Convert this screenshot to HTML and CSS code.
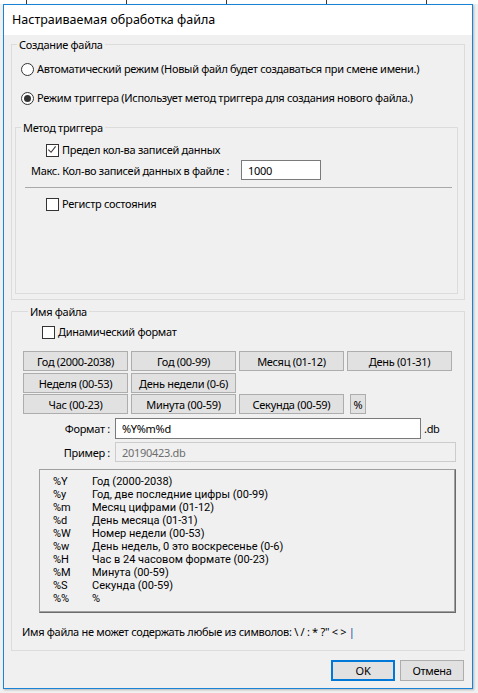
FILE: index.html
```html
<!DOCTYPE html>
<html lang="ru">
<head>
<meta charset="utf-8">
<title>Настраиваемая обработка файла</title>
<link rel="stylesheet" href="styles.css">
</head>
<body>
<div class="desk-top"></div>
<div class="dialog">
  <div class="titlebar">Настраиваемая обработка файла</div>
  <div class="client">
    <fieldset class="group g-create">
      <legend>Создание файла</legend>
      <div class="radio-row r1"><span class="radio"></span><span>Автоматический режим (Новый файл будет создаваться при смене имени.)</span></div>
      <div class="radio-row r2"><span class="radio on"></span><span>Режим триггера (Использует метод триггера для создания нового файла.)</span></div>
      <fieldset class="group g-trigger">
        <legend>Метод триггера</legend>
        <div class="check-row c-limit"><span class="check on"><svg viewBox="0 0 13 13" width="11" height="11"><polyline points="1.6,5.4 4.8,8.6 10.2,1.6" fill="none" stroke="#3a3a3a" stroke-width="1.3"/></svg></span><span>Предел кол-ва записей данных</span></div>
        <div class="max-row"><span class="max-label">Макс. Кол-во записей данных в файле :</span><span class="edit max-edit">1000</span></div>
        <div class="sep"></div>
        <div class="check-row c-state"><span class="check"></span><span>Регистр состояния</span></div>
      </fieldset>
    </fieldset>
    <fieldset class="group g-name">
      <legend>Имя файла</legend>
      <div class="check-row c-dyn"><span class="check"></span><span>Динамический формат</span></div>
      <div class="btn-row first">
        <span class="btn">Год (2000-2038)</span><span class="btn">Год (00-99)</span><span class="btn">Месяц (01-12)</span><span class="btn">День (01-31)</span>
      </div>
      <div class="btn-row second">
        <span class="btn">Неделя (00-53)</span><span class="btn">День недели (0-6)</span>
      </div>
      <div class="btn-row third">
        <span class="btn">Час (00-23)</span><span class="btn">Минута (00-59)</span><span class="btn">Секунда (00-59)</span><span class="btn pct">%</span>
      </div>
      <div class="field-row fmt">
        <span class="field-label">Формат :</span><span class="edit fmt-edit">%Y%m%d</span><span class="ext">.db</span>
      </div>
      <div class="field-row ex">
        <span class="field-label">Пример :</span><span class="edit disabled ex-edit">20190423.db</span>
      </div>
      <div class="legend-list">
        <div class="li"><span class="code">%Y</span><span>Год (2000-2038)</span></div>
        <div class="li"><span class="code">%y</span><span>Год, две последние цифры (00-99)</span></div>
        <div class="li"><span class="code">%m</span><span>Месяц цифрами (01-12)</span></div>
        <div class="li"><span class="code">%d</span><span>День месяца (01-31)</span></div>
        <div class="li"><span class="code">%W</span><span>Номер недели (00-53)</span></div>
        <div class="li"><span class="code">%w</span><span>День недель, 0 это воскресенье (0-6)</span></div>
        <div class="li"><span class="code">%H</span><span>Час в 24 часовом формате (00-23)</span></div>
        <div class="li"><span class="code">%M</span><span>Минута (00-59)</span></div>
        <div class="li"><span class="code">%S</span><span>Секунда (00-59)</span></div>
        <div class="li"><span class="code">%%</span><span>%</span></div>
      </div>
      <div class="note">Имя файла не может содержать любые из символов: \ / : * ?" &lt; &gt; <span class="bar">|</span></div>
    </fieldset>
    <div class="actions">
      <span class="btn default">OK</span><span class="btn">Отмена</span>
    </div>
  </div>
</div>
</body>
</html>
```
FILE: styles.css
```css
html, body {
  margin: 0;
  padding: 0;
}
body {
  width: 478px;
  height: 693px;
  overflow: hidden;
  background: #f0f0f0;
  font-family: "Noto Sans", "DejaVu Sans", sans-serif;
  font-size: 11px;
  letter-spacing: -0.3px;
  color: #000;
}
.desk-top {
  height: 4px;
  background-color: #fff;
  background-image: repeating-linear-gradient(to right, transparent 0 26px, #3a3a3a 26px 27px, transparent 27px 100px);
}
.dialog {
  margin-left: 3px;
  width: 470px;
  height: 685px;
  box-sizing: border-box;
  border: 1px solid #1883d7;
  background: #f0f0f0;
  box-shadow: 1px 1px 2px rgba(0, 0, 0, 0.25);
  overflow: hidden;
}
.titlebar {
  height: 30px;
  background: #fff;
  padding-left: 8px;
  display: flex;
  align-items: center;
  font-size: 12.5px;
  letter-spacing: 0;
  line-height: 16px;
}
.client {
  padding: 0 7px;
}
fieldset.group {
  margin: 0;
  padding: 0;
  border: 1px solid #dcdcdc;
  min-width: 0;
}
fieldset.group > legend {
  margin-left: 5px;
  padding: 0 2px;
  line-height: 17px;
  height: 17px;
}
.g-create {
  margin-top: 1px !important;
}
.radio-row, .check-row {
  display: flex;
  align-items: center;
  height: 16px;
  line-height: 16px;
}
.radio-row {
  margin-left: 9px;
  gap: 3px;
}
.r1 { margin-top: 8px; }
.r2 { margin-top: 13px; }
.radio {
  width: 13px;
  height: 13px;
  box-sizing: border-box;
  border: 1px solid #333;
  border-radius: 50%;
  background: #fff;
  display: flex;
  align-items: center;
  justify-content: center;
  flex: none;
}
.radio.on::after {
  content: "";
  width: 7px;
  height: 7px;
  border-radius: 50%;
  background: #333;
}
.check {
  width: 13px;
  height: 13px;
  box-sizing: border-box;
  border: 1px solid #333;
  background: #fff;
  display: flex;
  align-items: center;
  justify-content: center;
  flex: none;
}
.check-row {
  gap: 3px;
}
.g-trigger {
  margin: 13px 6px 5px 3px !important;
  padding-bottom: 81px !important;
}
.c-limit {
  margin-top: 6px;
  margin-left: 30px;
}
.max-row {
  margin-top: 2px;
  margin-left: 15px;
  display: flex;
  align-items: center;
  height: 20px;
}
.max-label {
  width: 210px;
  flex: none;
}
.edit {
  box-sizing: border-box;
  border: 1px solid #7a7a7a;
  background: #fff;
  display: flex;
  align-items: center;
  padding-left: 6px;
  flex: none;
}
.max-edit {
  width: 80px;
  height: 20px;
}
.sep {
  margin: 7px 5px 0 9px;
  height: 1px;
  background: #a9a9a9;
}
.c-state {
  margin-top: 8px;
  margin-left: 30px;
}
.g-name {
  margin-top: 3px !important;
  padding: 0 0 10px 11px !important;
}
.c-dyn {
  margin-top: 4px;
  margin-left: 19px;
}
.btn-row {
  display: flex;
  gap: 3px;
}
.btn-row.first { margin-top: 11px; }
.btn-row.second { margin-top: 2px; }
.btn-row.third { margin-top: 1px; }
.btn {
  box-sizing: border-box;
  width: 105px;
  height: 20px;
  border: 1px solid #adadad;
  background: #e1e1e1;
  display: flex;
  align-items: center;
  justify-content: center;
  flex: none;
}
.btn.pct {
  width: 16px;
  margin-left: 3px;
}
.field-row {
  display: flex;
  align-items: center;
}
.field-label {
  width: 87px;
  margin-right: 5px;
  text-align: right;
  flex: none;
}
.fmt { margin-top: 4px; }
.fmt-edit {
  width: 306px;
  height: 21px;
}
.ext {
  margin-left: 3px;
}
.ex { margin-top: 3px; }
.ex-edit {
  width: 341px;
  height: 20px;
}
.edit.disabled {
  background: #f0f0f0;
  border-color: #cccccc;
  color: #6d6d6d;
}
.legend-list {
  margin-top: 7px;
  margin-left: 16px;
  width: 417px;
  box-sizing: border-box;
  border-top: 1px solid #a0a0a0;
  border-left: 1px solid #a0a0a0;
  border-right: 1px solid #6b6b6b;
  border-bottom: 1px solid #6b6b6b;
  box-shadow: inset -1px -1px 0 #a0a0a0;
  padding: 5px 0 7px 13px;
  font-family: Roboto, "Noto Sans", sans-serif;
  letter-spacing: 0;
}
.li {
  display: flex;
  height: 13px;
  line-height: 13px;
}
.code {
  width: 39px;
  flex: none;
}
.note {
  margin-top: 11px;
  margin-left: -1px;
  line-height: 16px;
}
.bar {
  color: #1d4f9c;
}
.actions {
  display: flex;
  justify-content: flex-end;
  gap: 5px;
  margin-top: 9px;
  margin-right: 1px;
}
.actions .btn {
  width: 64px;
  height: 21px;
}
.actions .btn.default {
  border: 2px solid #0078d7;
}
```
